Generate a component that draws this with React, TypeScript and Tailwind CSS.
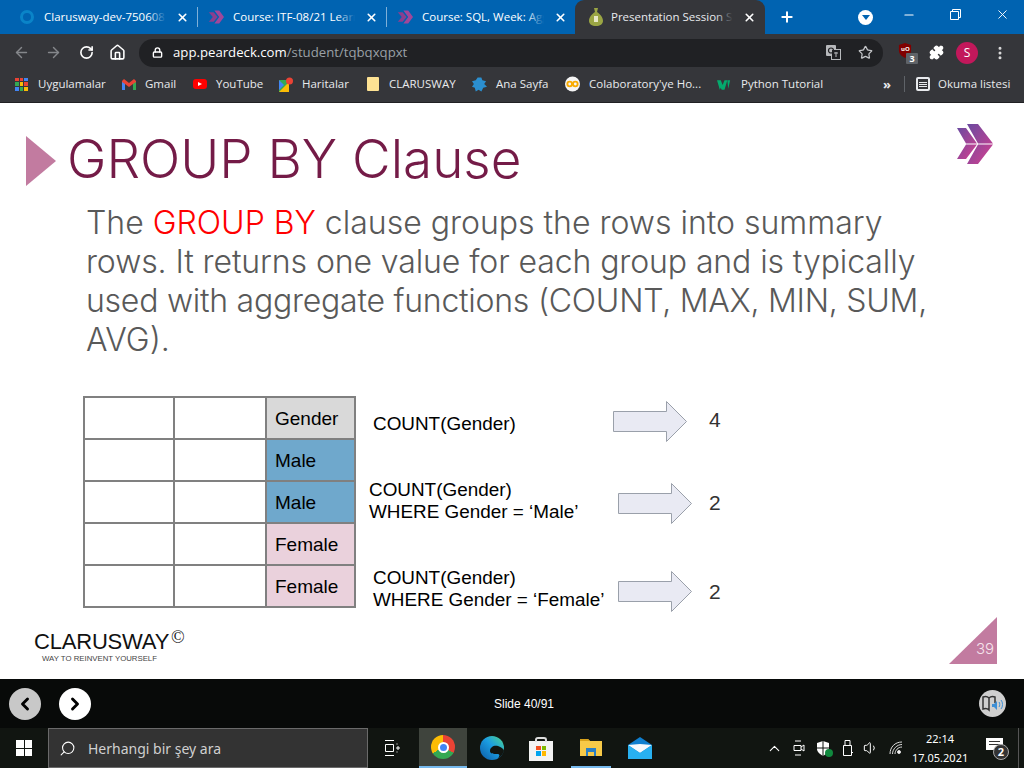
import { ArrowLeft, ArrowRight, RotateCw, Home, Lock, Star, Puzzle, MoreVertical, X, Plus, Minus, ChevronLeft, ChevronRight, Search, ChevronUp, Volume1 } from "lucide-react";

const Chevrons = ({ size = 16 }: { size?: number }) => (
  <svg width={size} height={size} viewBox="0 0 20 20">
    <path d="M1 4h6l5 6-5 6H1l5-6z" fill="#8b3f8f" />
    <path d="M8 2h6l6 8-6 8H8l6-8z" fill="#a0479a" />
  </svg>
);

const Tab = ({ icon, title }: { icon: React.ReactNode; title: string }) => (
  <div className="flex items-center h-[34px] shrink-0 w-[178px]">
    <div className="w-[16px] flex justify-center shrink-0">{icon}</div>
    <div className="relative ml-[9px] w-[122px] overflow-hidden whitespace-nowrap text-[11.5px] text-white">
      {title}
      <div className="absolute right-0 top-0 bottom-0 w-[18px] bg-gradient-to-r from-transparent to-[#0063b1]" />
    </div>
    <X size={13} strokeWidth={3} className="text-white ml-[10px] shrink-0" />
  </div>
);

const Bookmark = ({ icon, label, w }: { icon: React.ReactNode; label: string; w: string }) => (
  <div className={`flex items-center gap-[9px] shrink-0 text-[11.5px] text-[#e8eaed] ${w}`}>
    <div className="w-[15px] flex justify-center shrink-0">{icon}</div>
    <span className="whitespace-nowrap">{label}</span>
  </div>
);

const Arrow = () => (
  <svg width="75" height="41" viewBox="0 0 75 41" className="shrink-0">
    <path d="M.5 10.500h53V.5l20 20-20 20v-10H.5z" fill="#e9eaf3" stroke="#9aa0aa" strokeWidth="1" />
  </svg>
);

const rows = [
  { label: "Gender", bg: "bg-[#d9d9d9]" },
  { label: "Male", bg: "bg-[#6fa8cc]" },
  { label: "Male", bg: "bg-[#6fa8cc]" },
  { label: "Female", bg: "bg-[#ead1dc]" },
  { label: "Female", bg: "bg-[#ead1dc]" },
];

const arial = "font-['Liberation_Sans',Arial,sans-serif]";

export default function App() {
  return (
    <div className="w-[1024px] h-[768px] overflow-hidden flex flex-col bg-white font-['Open_Sans',sans-serif]">
      {/* tab strip */}
      <div className="h-[34px] bg-[#0063b1] flex items-center shrink-0">
        <div className="w-[19px] shrink-0" />
        <Tab title="Clarusway-dev-750608" icon={<div className="w-[14px] h-[14px] rounded-full border-[3px] border-[#0a84c8]" />} />
        <div className="w-px h-[20px] bg-[#7fb0d8] shrink-0" />
        <div className="w-[10px] shrink-0" />
        <Tab title="Course: ITF-08/21 Learn" icon={<Chevrons />} />
        <div className="w-px h-[20px] bg-[#7fb0d8] shrink-0" />
        <div className="w-[10px] shrink-0" />
        <Tab title="Course: SQL, Week: Agg" icon={<Chevrons />} />
        <div className="h-[34px] w-[190px] bg-[#35363a] rounded-t-[9px] flex items-center pl-[13px] shrink-0">
          <svg width="16" height="20" viewBox="0 0 16 20" className="shrink-0">
            <path d="M6 1h4l-1 4c3 2 6 5 6 9 0 3-3 5-7 5s-7-2-7-5c0-4 3-7 6-9z" fill="#9aa544" />
            <rect x="6" y="9" width="4" height="6" fill="#e8e8c8" />
          </svg>
          <div className="relative ml-[7px] w-[122px] overflow-hidden whitespace-nowrap text-[11.5px] text-[#e8eaed]">
            Presentation Session Student
            <div className="absolute right-0 top-0 bottom-0 w-[18px] bg-gradient-to-r from-transparent to-[#35363a]" />
          </div>
          <X size={13} strokeWidth={3} className="text-white ml-[10px] shrink-0" />
        </div>
        <Plus size={16} strokeWidth={3} className="text-white ml-[14px] shrink-0" />
        <div className="w-[15px] h-[15px] rounded-full bg-white ml-[63px] flex items-center justify-center shrink-0">
          <div className="w-0 h-0 border-l-[4px] border-r-[4px] border-t-[5px] border-l-transparent border-r-transparent border-t-[#0063b1]" />
        </div>
        <Minus size={14} className="text-white ml-[29px] -mt-[5px] shrink-0" />
        <svg width="11" height="11" viewBox="0 0 11 11" className="ml-[34px] -mt-[5px] shrink-0 text-white" fill="none" stroke="currentColor">
          <path d="M.5 2.500h8v8h-8zM2.500 2.500v-2h8v8h-2" />
        </svg>
        <X size={15} strokeWidth={1.5} className="text-white ml-[34px] -mt-[5px] shrink-0" />
      </div>

      {/* toolbar */}
      <div className="h-[37px] bg-[#35363a] flex items-center shrink-0">
        <ArrowLeft size={17} className="text-[#85878b] ml-[13px] shrink-0" />
        <ArrowRight size={17} className="text-[#85878b] ml-[15px] shrink-0" />
        <RotateCw size={15} strokeWidth={2.6} className="text-white ml-[17px] shrink-0" />
        <Home size={17} strokeWidth={2.2} className="text-white ml-[15px] shrink-0" />
        <div className="ml-[13px] h-[28px] w-[744px] rounded-full bg-[#202124] flex items-center shrink-0">
          <Lock size={11} strokeWidth={3} className="text-white ml-[13px] shrink-0" />
          <span className="ml-[10px] text-[13.2px] text-white">
            app.peardeck.com<span className="text-[#9aa0a6]">/student/tqbqxqpxt</span>
          </span>
          <svg width="15" height="15" viewBox="0 0 15 15" className="ml-auto shrink-0">
            <rect x="0" y="0" width="10" height="11" rx="1" fill="#b7b9bc" />
            <rect x="5.500" y="4.500" width="9" height="10" fill="#202124" stroke="#b7b9bc" />
            <circle cx="5" cy="5.500" r="2.500" fill="none" stroke="#202124" strokeWidth="1.200" />
            <path d="M8 8h4M10 7v5" stroke="#b7b9bc" />
          </svg>
          <Star size={15} strokeWidth={2} className="text-[#c4c6c9] ml-[17px] mr-[10px]" />
        </div>
        <div className="relative ml-[15px] w-[16px] h-[17px] shrink-0 -mt-[3px]">
          <svg width="14" height="15" viewBox="0 0 15 16">
            <path d="M1 2l6.500-2L14 2v6c0 4-3 6-6.500 8C4 14 1 12 1 8z" fill="#800000" />
          </svg>
          <span className="absolute left-[3px] top-[2px] text-[6px] font-bold text-white">uO</span>
          <div className="absolute left-[8px] top-[10px] w-[12px] h-[11px] rounded-[1px] bg-[#5f6368] text-[9px] leading-[11px] text-center font-bold text-white">
            3
          </div>
        </div>
        <Puzzle size={15} fill="white" className="text-white ml-[15px] shrink-0" />
        <div className="w-[22px] h-[22px] rounded-full bg-[#c2185b] text-white text-[12px] flex items-center justify-center ml-[12px] shrink-0">
          S
        </div>
        <MoreVertical size={16} strokeWidth={2.5} className="text-[#dcdcdc] ml-[14px] shrink-0" />
      </div>

      {/* bookmarks */}
      <div className="h-[32px] bg-[#35363a] flex items-center pb-[5px] shrink-0 border-b border-[#202124]">
        <div className="w-[14px] shrink-0" />
        <Bookmark
          w="w-[107px]"
          label="Uygulamalar"
          icon={
            <div className="grid grid-cols-3 gap-[1px] w-[13px] h-[13px]">
              <i className="bg-[#ea4335]" /><i className="bg-[#ea4335]" /><i className="bg-[#4285f4]" />
              <i className="bg-[#34a853]" /><i className="bg-[#fbbc05]" /><i className="bg-[#ea4335]" />
              <i className="bg-[#4285f4]" /><i className="bg-[#34a853]" /><i className="bg-[#fbbc05]" />
            </div>
          }
        />
        <Bookmark
          w="w-[71px]"
          label="Gmail"
          icon={
            <svg width="14" height="11" viewBox="0 0 14 11">
              <path d="M0 2v9h3V5l4 3 4-3v6h3V2l-2-2-5 4-5-4z" fill="#ea4335" />
              <path d="M0 3v8h3V5z" fill="#4285f4" />
              <path d="M11 5v6h3V3z" fill="#34a853" />
            </svg>
          }
        />
        <Bookmark
          w="w-[86px]"
          label="YouTube"
          icon={
            <div className="w-[14px] h-[10px] rounded-[3px] bg-[#f00] flex items-center justify-center">
              <div className="w-0 h-0 border-y-[2px] border-l-[4px] border-y-transparent border-l-white" />
            </div>
          }
        />
        <Bookmark
          w="w-[87px]"
          label="Haritalar"
          icon={
            <svg width="14" height="15" viewBox="0 0 14 15">
              <path d="M0 3h10v12H0z" fill="#34a853" />
              <path d="M0 15L10 5v10z" fill="#fbbc05" />
              <path d="M0 3l5 5-5 5z" fill="#4285f4" />
              <circle cx="10.500" cy="4" r="3.500" fill="#ea4335" />
            </svg>
          }
        />
        <Bookmark
          w="w-[107px]"
          label="CLARUSWAY"
          icon={<div className="w-[12px] h-[14px] rounded-[1px] bg-[#fde293] shrink-0" />}
        />
        <Bookmark
          w="w-[93px]"
          label="Ana Sayfa"
          icon={
            <svg width="15" height="15" viewBox="0 0 16 15" fill="#2b8fd0">
              <path d="M6 0h4l1 3 4 1-2 3 3 3-4 1-2 4-3-2-3 2-1-4-3-1 2-3-2-3 4-1z" />
            </svg>
          }
        />
        <Bookmark
          w="w-[152px]"
          label="Colaboratory'ye Ho..."
          icon={
            <svg width="16" height="16" viewBox="0 0 16 16" fill="none" stroke="#f9ab00" strokeWidth="2">
              <circle cx="8" cy="8" r="8" fill="#f5f5f5" stroke="none" />
              <circle cx="5" cy="8" r="2.500" />
              <circle cx="11" cy="8" r="2.500" />
            </svg>
          }
        />
        <Bookmark
          w="w-[166px]"
          label="Python Tutorial"
          icon={
            <svg width="16" height="11" viewBox="0 0 16 11" fill="#04aa6d">
              <path d="M0 1h4l2 5 2-5h3l-3 10H5l-1-2-1 2z" />
              <path d="M11 1h3l-2 9z" />
            </svg>
          }
        />
        <span className="text-[#e8eaed] text-[13px] font-bold leading-none shrink-0 w-[9px]">»</span>
        <div className="w-px h-[16px] bg-[#5f6368] ml-[12px] shrink-0" />
        <div className="w-[14px] h-[14px] border-2 border-[#e8eaed] rounded-[2px] ml-[11px] shrink-0 flex flex-col justify-center gap-[1px] px-[1px]">
          <i className="h-px bg-[#e8eaed]" /><i className="h-px bg-[#e8eaed]" /><i className="h-px bg-[#e8eaed]" />
        </div>
        <span className="ml-[8px] text-[11.5px] text-[#e8eaed] whitespace-nowrap">Okuma listesi</span>
      </div>

      {/* slide */}
      <div className="relative h-[576px] bg-white shrink-0 font-['Inter',sans-serif] font-light">
        <div className="flex items-center pt-[25px] pl-[26px]">
          <div className="w-0 h-0 border-y-[25px] border-l-[30px] border-y-transparent border-l-[#c27ba0] mt-[4px]" />
          <h1 className="ml-[11px] text-[53px] leading-[62px] text-[#741b47]">GROUP BY Clause</h1>
        </div>
        <p className="ml-[86px] mt-[13px] w-[900px] text-[32px] leading-[39px] text-[#595959] whitespace-nowrap">
          The <span className="text-[#ff0000]">GROUP BY</span> clause groups the rows into summary
          <br />
          <span className="tracking-[-0.1px]">rows. It returns one value for each group and is typically</span>
          <br />
          <span className="tracking-[-0.25px]">used with aggregate functions (COUNT, MAX, MIN, SUM,</span>
          <br />
          AVG).
        </p>

        <div className={`flex mt-[37px] ml-[83px] ${arial} font-normal`}>
          <div className="self-start w-[273px] border-l-2 border-t-2 border-[#808080] text-[19px] text-black">
            {rows.map((r, i) => (
              <div key={i} className="flex h-[42px] border-b-2 border-[#808080]">
                <div className="w-[90px] border-r-2 border-[#808080]" />
                <div className="w-[92px] border-r-2 border-[#808080]" />
                <div className={`w-[89px] ${r.bg} border-r-2 border-[#808080] flex items-center pl-[8px] pt-[2px]`}>{r.label}</div>
              </div>
            ))}
          </div>

          <div className="ml-[13px] flex flex-col text-[18.900px] leading-[22px] text-black">
            <div className="flex items-center h-[42px] mt-[4px]">
              <span className="ml-[4px] w-[240px] mt-[6px]">COUNT(Gender)</span>
              <Arrow />
              <span className="ml-[21px] -mt-[2px] text-[21px] text-[#333]">4</span>
            </div>
            <div className="flex items-center h-[44px] mt-[39px]">
              <span className="w-[249px] mb-[4px] whitespace-nowrap">
                COUNT(Gender)
                <br />
                WHERE Gender = ‘Male’
              </span>
              <Arrow />
              <span className="ml-[16px] text-[21px] text-[#333]">2</span>
            </div>
            <div className="flex items-center h-[44px] mt-[44px]">
              <span className="ml-[4px] w-[245px] mb-[4px] whitespace-nowrap">
                COUNT(Gender)
                <br />
                WHERE Gender = ‘Female’
              </span>
              <Arrow />
              <span className="ml-[16px] mt-[2px] text-[21px] text-[#333]">2</span>
            </div>
          </div>
        </div>

        {/* logo */}
        <svg width="36" height="40" viewBox="0 0 36 40" className="absolute left-[957px] top-[21px]">
          <defs>
            <linearGradient id="logoA" x1="0" y1="0" x2="1" y2="1">
              <stop offset="0" stopColor="#6a4aa0" />
              <stop offset="1" stopColor="#d6408f" />
            </linearGradient>
          </defs>
          <path d="M0 4h9l11 15.500H9zM9 20.500h11L9 35H0z" fill="url(#logoA)" />
          <path d="M10 0h11l15 19.500H21zM21 20.500h15L21 40H10z" fill="url(#logoA)" />
        </svg>
        <div className="absolute left-[34px] top-[520px] text-[#111] font-normal">
          <div className={`${arial} text-[22px] leading-[28px] tracking-[-0.2px] whitespace-nowrap`}>
            CLARUSWAY<span className="font-['Liberation_Serif',serif] text-[18px] ml-[2px] align-[6px]">©</span>
          </div>
          <div className={`${arial} ml-[8px] -mt-[1px] text-[7.800px] leading-[8px] text-[#444] whitespace-nowrap`}>WAY TO REINVENT YOURSELF</div>
        </div>
        <div className="absolute left-[949px] top-[514px] w-[48px] h-[47px] bg-[#c27ba0] [clip-path:polygon(100%_0,100%_100%,0_100%)]" />
        <span className="absolute left-[976px] top-[537px] text-[15px] leading-[18px] text-[#f5e3ec]">39</span>
      </div>

      {/* peardeck bar */}
      <div className="h-[49px] bg-[#080a09] flex items-center shrink-0">
        <div className="w-[32px] h-[32px] rounded-full bg-[#c8c8c8] ml-[9px] flex items-center justify-center">
          <ChevronLeft size={20} strokeWidth={3.500} className="text-black" />
        </div>
        <div className="w-[32px] h-[32px] rounded-full bg-white ml-[18px] flex items-center justify-center">
          <ChevronRight size={20} strokeWidth={3.500} className="text-black" />
        </div>
        <span className={`${arial} ml-[402px] w-[62px] text-[12px] text-white whitespace-nowrap text-center`}>Slide 40/91</span>
        <div className="w-[27px] h-[27px] rounded-full bg-[#cfcfcf] ml-[424px] flex items-center justify-center shrink-0">
          <svg width="21" height="17" viewBox="0 0 21 17" fill="none">
            <path d="M1 2c3-1 5 0 6 1v12c-1-1-3-2-6-1zM7 3c1-1 3-2 6-1v6" stroke="#333" strokeWidth="1.500" />
            <path d="M10 9h2l3-3v9l-3-3h-2z" fill="#3d8fd6" />
            <path d="M17 7c1 1 1 4 0 5M19 5c2 2 2 7 0 9" stroke="#3d8fd6" />
          </svg>
        </div>
      </div>

      {/* taskbar */}
      <div className="h-[40px] bg-[#111511] flex items-center shrink-0 relative">
        <div className="ml-[16px] grid grid-cols-2 gap-[1px] w-[16px] h-[16px] shrink-0">
          <i className="bg-white" /><i className="bg-white" /><i className="bg-white" /><i className="bg-white" />
        </div>
        <div className="ml-[16px] w-[320px] h-[40px] bg-[#333333] border border-[#6a6a6a] flex items-center shrink-0">
          <Search size={17} strokeWidth={1.500} className="text-white ml-[10px] -scale-x-100" />
          <span className="ml-[12px] text-[14px] text-[#d0d0d0] font-['Noto_Sans',sans-serif]">Herhangi bir şey ara</span>
        </div>
        <div className="ml-[16px] w-[16px] h-[16px] shrink-0 flex items-center">
          <svg width="16" height="16" viewBox="0 0 16 16" fill="none" stroke="white">
            <path d="M1 .5h9M1 15.500h9M1.500 4.500h8v7h-8zM13 3.500v1M13 7h2v2h-2zM13 11.500v1" />
          </svg>
        </div>
        <div className="ml-[19px] w-[48px] h-[40px] bg-[#3f443d] border-b-2 border-[#76b9ed] flex items-center justify-center shrink-0">
          <div className="w-[24px] h-[24px] rounded-full bg-[conic-gradient(#ea4335_0_33%,#34a853_33%_66%,#fbbc05_66%_100%)] flex items-center justify-center">
            <div className="w-[11px] h-[11px] rounded-full bg-[#4285f4] border-2 border-white" />
          </div>
        </div>
        <svg width="24" height="24" viewBox="0 0 24 24" className="ml-[13px] shrink-0">
          <defs>
            <linearGradient id="edgeA" x1="0" y1="1" x2="1" y2="0">
              <stop offset="0" stopColor="#0c59a4" />
              <stop offset="0.55" stopColor="#1b9de2" />
              <stop offset="1" stopColor="#4fd68a" />
            </linearGradient>
          </defs>
          <circle cx="12" cy="12" r="12" fill="url(#edgeA)" />
          <path d="M10 15c0-4 4-6 8-5 3 1 6 3 6 5-1 3-3 6-6 7 2-2 2-4-1-4-3 0-7 0-7-3z" fill="#111511" />
        </svg>
        <div className="ml-[25px] w-[24px] h-[20px] mt-[5px] bg-[#f3f3f3] shrink-0 relative flex items-center justify-center">
          <div className="absolute -top-[4px] left-[6px] w-[12px] h-[5px] border-2 border-b-0 border-[#ddd] rounded-t-[3px]" />
          <div className="grid grid-cols-2 gap-px w-[10px] h-[10px]">
            <i className="bg-[#f25022]" /><i className="bg-[#7fba00]" /><i className="bg-[#00a4ef]" /><i className="bg-[#ffb900]" />
          </div>
        </div>
        <div className="ml-[18px] w-[40px] h-[40px] border-b-2 border-[#76b9ed] shrink-0 flex items-center justify-center">
          <svg width="22" height="18" viewBox="0 0 22 18">
            <path d="M0 1h8l2 2h12v15H0z" fill="#f7c948" />
            <path d="M0 1h8l2 2H0z" fill="#d9a21b" />
            <path d="M6 10h10v8h-2v-4H8v4H6z" fill="#2b7fc4" />
          </svg>
        </div>
        <div className="ml-[17px] w-[24px] shrink-0">
          <svg width="24" height="22" viewBox="0 0 24 22">
            <path d="M0 8L12 0l12 8v14H0z" fill="#0f7fcf" />
            <path d="M0 8l12 8 12-8-12-1z" fill="#f5f9fc" />
            <path d="M0 8l12 8 12-8v14H0z" fill="#28b0f0" />
          </svg>
        </div>
        <ChevronUp size={17} strokeWidth={1.500} className="text-white ml-[114px] shrink-0" />
        <svg width="12" height="16" viewBox="0 0 12 16" fill="none" stroke="white" className="ml-[10px] shrink-0">
          <path d="M2 1h6M2 15h6M1 5.500h7v5H1zM8 7l3-2v6L8 9" />
        </svg>
        <div className="ml-[11px] w-[15px] h-[15px] shrink-0 relative">
          <svg width="15" height="15" viewBox="0 0 15 15">
            <path d="M7 0l6 2v6c0 3-3 5-6 7-3-2-6-4-6-7V2z" fill="white" />
            <path d="M7 0v15M1 7h12" stroke="#111511" />
          </svg>
          <div className="absolute -right-[2px] -bottom-[1px] w-[8px] h-[8px] rounded-full bg-[#10893e]" />
        </div>
        <svg width="12" height="16" viewBox="0 0 12 16" fill="none" stroke="white" className="ml-[11px] shrink-0">
          <path d="M3 .5h5v5H3zM1.500 5.500h8v10h-8zM9 14l2-2" />
        </svg>
        <Volume1 size={16} strokeWidth={1.500} className="text-white ml-[9px] shrink-0" />
        <svg width="14" height="14" viewBox="0 0 14 14" fill="none" stroke="#dcdcdc" className="ml-[10px] shrink-0">
          <path d="M1 13C1 6 6 1 13 1M3.500 13C3.500 8 8 3.500 13 3.500M6 13c0-3.500 3-7 7-7" />
          <circle cx="10" cy="11" r="1.500" fill="white" />
        </svg>
        <div className="ml-[9px] w-[56px] text-center text-[11px] leading-[19px] text-white font-['Noto_Sans',sans-serif] shrink-0 whitespace-nowrap">
          22:14
          <br />
          17.05.2021
        </div>
        <div className="ml-[18px] relative w-[17px] h-[12px] bg-white shrink-0 -mt-[8px]">
          <div className="absolute left-[3px] top-[3px] w-[11px] h-px bg-[#333]" />
          <div className="absolute left-[3px] top-[6px] w-[11px] h-px bg-[#333]" />
          <div className="absolute left-[7px] top-[6px] w-[16px] h-[16px] rounded-full bg-[#333] border border-[#aaa] text-[11px] leading-[14px] text-center font-bold text-white">
            2
          </div>
        </div>
        <div className="absolute right-[5px] top-0 bottom-0 w-px bg-[#555]" />
      </div>
    </div>
  );
}
